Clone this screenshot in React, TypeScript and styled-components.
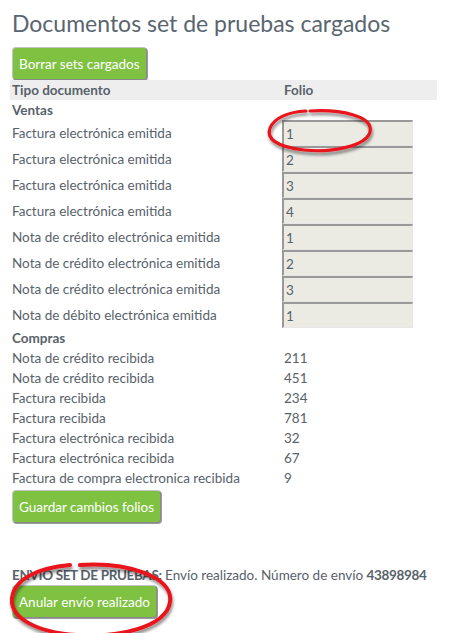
import React from "react";
import styled, { createGlobalStyle } from "styled-components";

const Global = createGlobalStyle`
  html, body { margin: 0; padding: 0; background: #fff; }
  body { font-family: Lato, "Open Sans", sans-serif; color: #58626b; }
`;

const Page = styled.div`
  position: relative;
  width: 453px;
  height: 633px;
  overflow: hidden;
  padding: 0 16px 0 10px;
  box-sizing: border-box;
`;

const Title = styled.h1`
  margin: 0;
  padding: 8px 0 0 2px;
  font-size: 23px;
  font-weight: 400;
  line-height: 30px;
  color: #5a6570;
`;

const Button = styled.button<{ $h?: number }>`
  display: inline-block;
  margin-left: 2px;
  font-family: inherit;
  font-size: 13.5px;
  color: #fff;
  background: #7fc242;
  border: 1px solid #c4c4c4;
  border-right-color: #8a8a8a;
  border-bottom-color: #8a8a8a;
  border-radius: 4px;
  box-shadow: 1px 1px 0 #9a9a9a;
  padding: 0 6px;
  height: ${(p) => p.$h ?? 33}px;
  cursor: pointer;
`;

const Spacer = styled.div<{ $h: number }>`
  height: ${(p) => p.$h}px;
`;

const Table = styled.div`
  display: grid;
  grid-template-columns: 272px 1fr;
  font-size: 13.5px;
`;

const HeadRow = styled.div`
  display: contents;
`;

const HeadCell = styled.div`
  background: #eeeeee;
  font-weight: 700;
  padding: 0 2px;
  height: 20px;
  line-height: 20px;
`;

const Section = styled.div`
  grid-column: 1 / 3;
  font-weight: 700;
  padding: 0 2px;
  height: 20px;
  line-height: 20px;
`;

const Cell = styled.div<{ $h: number }>`
  padding: 0 2px;
  height: ${(p) => p.$h}px;
  line-height: ${(p) => p.$h}px;
  display: flex;
  align-items: center;
`;

const FolioCell = styled.div<{ $h: number }>`
  height: ${(p) => p.$h}px;
  display: flex;
  align-items: center;
`;

const FolioInput = styled.input`
  box-sizing: border-box;
  width: 131px;
  height: 26px;
  margin: 0;
  padding: 0 2px;
  font-family: inherit;
  font-size: 13.5px;
  color: #58626b;
  background: #ebebe4;
  border-style: solid;
  border-width: 2px 1px 1px 2px;
  border-color: #999 #e6e6e6 #e6e6e6 #999;
`;

const Envio = styled.div`
  font-size: 13.5px;
  line-height: 20px;
  padding-left: 2px;
  white-space: nowrap;
  b { font-weight: 700; letter-spacing: -0.35px; }
`;

const Mark = styled.svg`
  position: absolute;
  pointer-events: none;
  overflow: visible;
`;

const ventas = [
  ["Factura electrónica emitida", "1"],
  ["Factura electrónica emitida", "2"],
  ["Factura electrónica emitida", "3"],
  ["Factura electrónica emitida", "4"],
  ["Nota de crédito electrónica emitida", "1"],
  ["Nota de crédito electrónica emitida", "2"],
  ["Nota de crédito electrónica emitida", "3"],
  ["Nota de débito electrónica emitida", "1"],
];

const compras = [
  ["Nota de crédito recibida", "211"],
  ["Nota de crédito recibida", "451"],
  ["Factura recibida", "234"],
  ["Factura recibida", "781"],
  ["Factura electrónica recibida", "32"],
  ["Factura electrónica recibida", "67"],
  ["Factura de compra electronica recibida", "9"],
];

function Ellipse({ id, left, top, w, h, d, sw }: { id: string; left: number; top: number; w: number; h: number; d: string; sw: number }) {
  return (
    <Mark style={{ left, top }} width={w} height={h} viewBox={`0 0 ${w} ${h}`}>
      <defs>
        <filter id={id} x="-20%" y="-20%" width="140%" height="160%">
          <feGaussianBlur in="SourceAlpha" stdDeviation="1.5" />
          <feOffset dx="1" dy="3" />
          <feComponentTransfer><feFuncA type="linear" slope="0.45" /></feComponentTransfer>
          <feMerge><feMergeNode /><feMergeNode in="SourceGraphic" /></feMerge>
        </filter>
      </defs>
      <path d={d} fill="none" stroke="#e8141a" strokeWidth={sw} strokeLinecap="round" filter={`url(#${id})`} />
    </Mark>
  );
}

export default function App() {
  return (
    <Page>
      <Global />
      <Title>Documentos set de pruebas cargados</Title>
      <Spacer $h={9} />
      <Button>Borrar sets cargados</Button>
      <Table>
        <HeadRow>
          <HeadCell>Tipo documento</HeadCell>
          <HeadCell>Folio</HeadCell>
        </HeadRow>
        <Section>Ventas</Section>
        {ventas.map(([t, f], i) => (
          <React.Fragment key={"v" + i}>
            <Cell $h={26}>{t}</Cell>
            <FolioCell $h={26}>
              <FolioInput defaultValue={f} disabled />
            </FolioCell>
          </React.Fragment>
        ))}
        <Section>Compras</Section>
        {compras.map(([t, f], i) => (
          <React.Fragment key={"c" + i}>
            <Cell $h={20}>{t}</Cell>
            <Cell $h={20}>{f}</Cell>
          </React.Fragment>
        ))}
      </Table>
      <Spacer $h={2} />
      <Button>Guardar cambios folios</Button>
      <Spacer $h={42} />
      <Envio>
        <b>ENVIO SET DE PRUEBAS:</b> Envío realizado. Número de envío <b>43898984</b>
      </Envio>
      <Button>Anular envío realizado</Button>

      <Ellipse
        id="sh1" left={262} top={106} w={120} h={52} sw={3.2}
        d="M48 5 C 78 3, 112 10, 108 26 C 104 40, 70 47, 42 44 C 14 41, 4 32, 8 22 C 12 12, 26 6, 44 5"
      />
      <Ellipse
        id="sh2" left={6} top={558} w={176} h={90} sw={4}
        d="M74 7 C 120 4, 168 18, 164 44 C 160 70, 110 80, 70 77 C 30 74, 4 60, 6 40 C 8 22, 30 10, 64 7"
      />
    </Page>
  );
}
